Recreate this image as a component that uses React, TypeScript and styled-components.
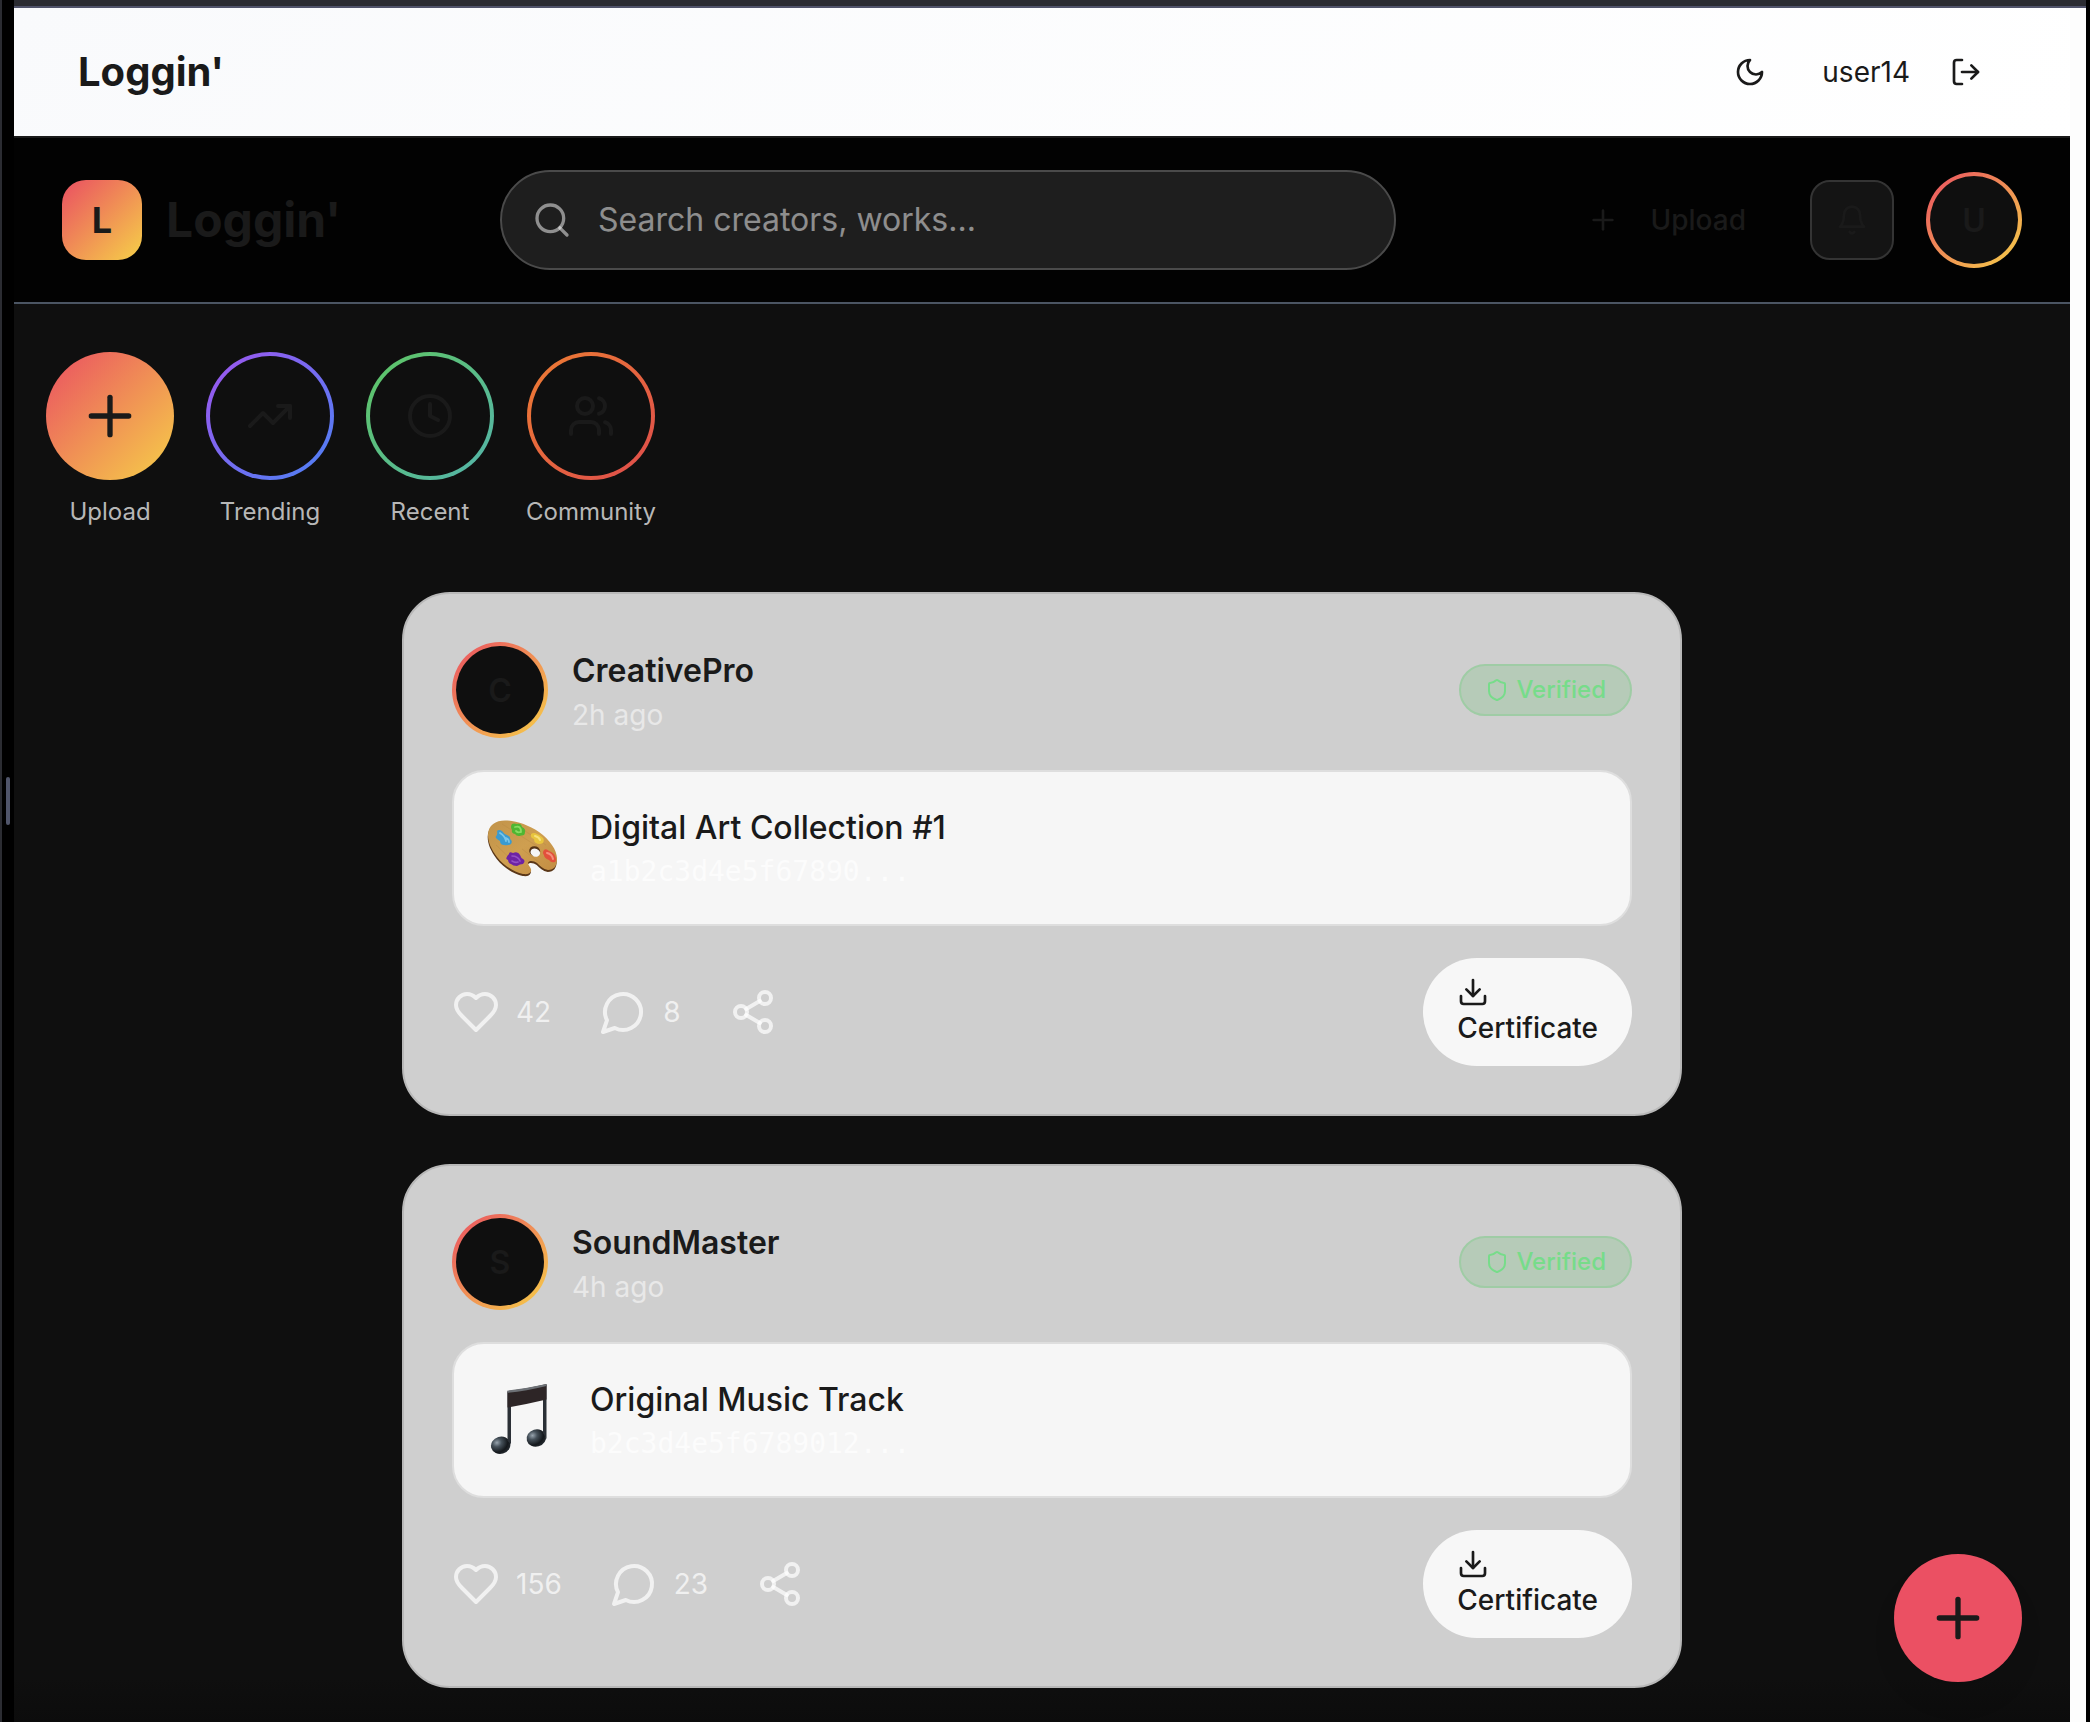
import React from "react";
import styled, { createGlobalStyle } from "styled-components";

const INK = "#1a1a1a";
const SUNSET = "linear-gradient(135deg, #ea4f62, #f6d048)";

const GlobalStyle = createGlobalStyle`
  *, *::before, *::after { box-sizing: border-box; }
  html, body { margin: 0; padding: 0; background: #000; }
  body { font-family: Inter, "Liberation Sans", sans-serif; color: ${INK}; overflow: hidden; }
  button { font: inherit; color: inherit; border: 0; padding: 0; background: none; }
`;

const Window = styled.div`
  display: flex;
  width: 2090px;
  height: 1722px;
  background: #000;
  border-left: 2px solid #2b2c32;
`;
const ResizeRail = styled.div`
  display: flex;
  align-items: center;
  width: 12px;
  padding: 0 0 120px 4px;
`;
const Grip = styled.span`
  width: 4px;
  height: 48px;
  border-radius: 2px;
  background: #50556a;
`;
const Viewport = styled.div`
  display: flex;
  flex-direction: column;
  width: 2072px;
  border-top: 6px solid #2b2c32;
`;
const Pane = styled.div`
  display: flex;
  flex: 1;
  min-height: 0;
  border-top: 2px solid #50536a;
  background: #fdfdfd;
`;
const Page = styled.div`
  display: flex;
  flex-direction: column;
  width: 2056px;
  background: linear-gradient(#0f0f0f 0, #0f0f0f 1670px, #0c0c0c 1714px);
`;

const TopBar = styled.header`
  display: flex;
  align-items: center;
  justify-content: space-between;
  height: 130px;
  padding: 0 88px 0 64px;
  border-bottom: 2px solid ${INK};
  background: linear-gradient(135deg, #f9fafc, #ffffff);
`;
const SiteTitle = styled.h1`
  margin: 0;
  font-size: 40px;
  line-height: 56px;
  font-weight: 700;
`;
const Account = styled.div`
  display: flex;
  align-items: center;
  font-size: 28px;
`;
const UserName = styled.span`
  margin: 0 40px 0 56px;
`;

const AppBar = styled.div`
  display: flex;
  align-items: center;
  justify-content: space-between;
  height: 166px;
  padding: 0 48px;
  border-bottom: 2px solid #4b5563;
  background: #020202;
`;
const Brand = styled.div`
  display: flex;
  align-items: center;
  gap: 24px;
  width: 438px;
`;
const BrandMark = styled.div`
  display: grid;
  place-items: center;
  width: 80px;
  height: 80px;
  border-radius: 24px;
  background: ${SUNSET};
  font-size: 36px;
  font-weight: 700;
`;
const BrandName = styled.span`
  padding-bottom: 2px;
  font-size: 48px;
  font-weight: 700;
`;
const SearchBox = styled.div`
  display: flex;
  align-items: center;
  gap: 26px;
  width: 896px;
  height: 100px;
  padding-left: 30px;
  border: 2px solid #4a4a4a;
  border-radius: 50px;
  background: #1e1e1e;
  color: rgba(255, 255, 255, 0.5);
  font-size: 32px;
`;
const SearchHint = styled.span`
  padding-bottom: 2px;
`;
const BarActions = styled.div`
  display: flex;
  align-items: center;
  justify-content: flex-end;
  flex: 1;
`;
const UploadLink = styled.button`
  display: flex;
  align-items: center;
  gap: 32px;
  margin-right: 64px;
  font-size: 28px;
  font-weight: 500;
`;
const BellButton = styled.button`
  display: grid;
  place-items: center;
  width: 84px;
  height: 80px;
  margin-right: 32px;
  border: 2px solid #343434;
  border-radius: 20px;
  background: #141414;
`;

const Ring = styled.div<{ $size: number; $paint: string; $solid?: boolean }>`
  display: flex;
  flex: none;
  width: ${(p) => p.$size}px;
  height: ${(p) => p.$size}px;
  padding: ${(p) => (p.$solid ? 0 : 4)}px;
  border-radius: 50%;
  background: ${(p) => p.$paint};
`;
const RingCore = styled.div<{ $solid?: boolean }>`
  display: grid;
  flex: 1;
  place-items: center;
  border-radius: 50%;
  background: ${(p) => (p.$solid ? "transparent" : "#0f0f0f")};
  font-size: 32px;
  font-weight: 600;
`;

const Stories = styled.nav`
  display: flex;
  gap: 32px;
  padding: 48px 32px 0;
`;
const Story = styled.div`
  display: flex;
  flex-direction: column;
  align-items: center;
  gap: 16px;
`;
const StoryLabel = styled.span`
  font-size: 24px;
  line-height: 32px;
  color: #b7b7b7;
`;

const Feed = styled.main`
  display: flex;
  flex-direction: column;
  gap: 48px;
  width: 1280px;
  margin: 64px 0 0 388px;
`;
const Card = styled.article`
  display: flex;
  flex-direction: column;
  height: 524px;
  padding: 48px;
  border: 2px solid #b8b8b8;
  border-radius: 48px;
  background: #cfcfcf;
`;
const CardHead = styled.div`
  display: flex;
  align-items: center;
  gap: 24px;
  height: 96px;
`;
const Author = styled.div`
  display: flex;
  flex: 1;
  flex-direction: column;
  padding-top: 1px;
`;
const AuthorName = styled.span`
  font-size: 32px;
  line-height: 48px;
  font-weight: 600;
`;
const Age = styled.span`
  font-size: 28px;
  line-height: 40px;
  color: #e8e8e8;
`;
const Verified = styled.span`
  display: flex;
  align-items: center;
  gap: 7px;
  height: 52px;
  padding: 0 24px 1px;
  border: 2px solid #9fcca5;
  border-radius: 26px;
  background: #b6cbb8;
  color: #77dc8a;
  font-size: 24px;
  font-weight: 500;
`;
const Work = styled.div`
  display: flex;
  align-items: center;
  gap: 32px;
  height: 156px;
  margin: 32px 0;
  padding: 0 32px;
  border: 2px solid #dedede;
  border-radius: 32px;
  background: #f6f6f6;
`;
const WorkInfo = styled.div`
  display: flex;
  flex-direction: column;
`;
const WorkTitle = styled.span`
  font-size: 32px;
  line-height: 48px;
  font-weight: 500;
`;
const Hash = styled.span`
  font-family: "DejaVu Sans Mono", monospace;
  font-size: 28px;
  line-height: 40px;
  color: #fcfcfc;
`;
const CardFoot = styled.div`
  display: flex;
  align-items: center;
  justify-content: space-between;
  height: 108px;
`;
const Reactions = styled.div`
  display: flex;
  gap: 48px;
`;
const Reaction = styled.button`
  display: flex;
  align-items: center;
  gap: 16px;
  color: rgba(255, 255, 255, 0.7);
  font-size: 28px;
`;
const Certificate = styled.button`
  display: flex;
  flex-direction: column;
  align-items: flex-start;
  height: 108px;
  padding: 18px 34px 0;
  border-radius: 54px;
  background: #f7f7f7;
  font-size: 28px;
  line-height: 40px;
  font-weight: 500;
`;
const Fab = styled.button`
  position: fixed;
  left: 1894px;
  top: 1554px;
  display: grid;
  place-items: center;
  width: 128px;
  height: 128px;
  border-radius: 50%;
  background: #eb5063;
  box-shadow: 0 20px 30px -6px rgba(0, 0, 0, 0.1);
`;

const ICONS = {
  moon: ["M12 3a6 6 0 0 0 9 9 9 9 0 1 1-9-9Z"],
  logout: ["M9 21H5a2 2 0 0 1-2-2V5a2 2 0 0 1 2-2h4", "m16 17 5-5-5-5", "M21 12H9"],
  search: ["M19 11a8 8 0 1 1-16 0 8 8 0 0 1 16 0", "m21 21-4.3-4.3"],
  plus: ["M5 12h14", "M12 5v14"],
  bell: ["M6 8a6 6 0 0 1 12 0c0 7 3 9 3 9H3s3-2 3-9", "M10.3 21a1.94 1.94 0 0 0 3.4 0"],
  trending: ["m22 7-8.5 8.5-5-5L2 17", "M16 7h6v6"],
  clock: ["M22 12a10 10 0 1 1-20 0 10 10 0 0 1 20 0", "M12 6v6l4 2"],
  users: [
    "M16 21v-2a4 4 0 0 0-4-4H6a4 4 0 0 0-4 4v2",
    "M13 7a4 4 0 1 1-8 0 4 4 0 0 1 8 0",
    "M22 21v-2a4 4 0 0 0-3-3.87",
    "M16 3.13a4 4 0 0 1 0 7.75",
  ],
  shield: [
    "M20 13c0 5-3.5 7.5-7.66 8.95a1 1 0 0 1-.67-.01C7.5 20.5 4 18 4 13V6a1 1 0 0 1 1-1c2 0 4.5-1.2 6.24-2.72a1.17 1.17 0 0 1 1.52 0C14.51 3.81 17 5 19 5a1 1 0 0 1 1 1z",
  ],
  heart: [
    "M19 14c1.49-1.46 3-3.21 3-5.5A5.5 5.5 0 0 0 16.5 3c-1.76 0-3 .5-4.5 2-1.5-1.5-2.74-2-4.5-2A5.5 5.5 0 0 0 2 8.5c0 2.3 1.5 4.05 3 5.5l7 7Z",
  ],
  comment: ["M7.9 20A9 9 0 1 0 4 16.1L2 22Z"],
  share: [
    "M21 5a3 3 0 1 1-6 0 3 3 0 0 1 6 0",
    "M9 12a3 3 0 1 1-6 0 3 3 0 0 1 6 0",
    "M21 19a3 3 0 1 1-6 0 3 3 0 0 1 6 0",
    "m8.59 13.51 6.83 3.98",
    "m15.41 6.51-6.82 3.98",
  ],
  download: ["M21 15v4a2 2 0 0 1-2 2H5a2 2 0 0 1-2-2v-4", "m7 10 5 5 5-5", "M12 15V3"],
};

function Icon({ name, size }: { name: keyof typeof ICONS; size: number }) {
  return (
    <svg
      width={size}
      height={size}
      viewBox="0 0 24 24"
      fill="none"
      stroke="currentColor"
      strokeWidth={2}
      strokeLinecap="round"
      strokeLinejoin="round"
    >
      {ICONS[name].map((d) => (
        <path key={d} d={d} />
      ))}
    </svg>
  );
}

const BOARD =
  "M2 23C2 13 10 8.500 19 8.500C30 8.500 42 13 53 20C64 28 71 38 71 47C71 54 68 58 62 58C57 57 54 54 51 51C48 49 43 48 42 51C42 54 46 56 45 59C44 62 41 62.500 37 62C28 60 18 54 11 45C5 37 2 30 2 23Z";

function Palette() {
  return (
    <svg width="72" height="72" viewBox="0 0 72 72">
      <defs>
        <linearGradient id="wood" x1="0" y1="0" x2="1" y2="1">
          <stop offset="0" stopColor="#c1934a" />
          <stop offset="0.5" stopColor="#cf9f50" />
          <stop offset="1" stopColor="#c28c42" />
        </linearGradient>
      </defs>
      <path d={BOARD} fill="#5a3718" transform="translate(-.3 2)" />
      <path d={BOARD} fill="url(#wood)" />
      <path d="M10 33 30 52M16 12l38 24M30 13l30 20M36 37l18 14" stroke="#b98a42" strokeWidth="0.800" opacity="0.500" />
      <ellipse cx="48.800" cy="39.300" rx="5.600" ry="4.900" fill="#553417" transform="rotate(20 49 39)" />
      <ellipse cx="49.500" cy="40.500" rx="4.900" ry="4" fill="#f6f6f6" transform="rotate(20 49 40)" />
      <path
        d="M11 19Q13 17 16 19Q18 22 21 23Q25 25 24 27Q27 29 25 32Q22 34 18 33Q14 33 14 29Q10 27 9.500 25Q12 23 11 19Z"
        fill="#3b9bd0"
      />
      <path d="M14 21q5 3 6 8M20 26q3 1 3 4" stroke="#7ac6ea" strokeWidth="1.800" fill="none" strokeLinecap="round" />
      <path
        d="M26 12Q28 11 31 12Q35 11 36 15Q40 17 39 20Q39 24 35 23.500Q31 25 29 22Q25 21 26 18Q24 15 26 12Z"
        fill="#4fb632"
      />
      <path d="M29 15q6-2 6 5M30 19q2 2 4 1" stroke="#88dc62" strokeWidth="1.800" fill="none" strokeLinecap="round" />
      <path
        d="M45 22Q48 20 51 22Q54 23 56 25Q59 27 57 31Q53 33 50 31Q48 30 48 27Q44 26 45 22Z"
        fill="#e8c43e"
      />
      <path d="M49 24q4 1 5 4" stroke="#f8e27c" strokeWidth="2" fill="none" strokeLinecap="round" />
      <path
        d="M58 38Q60 36 63 39Q68 41 69 44Q71 48 69 50Q65 51 63 48Q58 46 58 43Q56 41 58 38Z"
        fill="#e2503c"
      />
      <path d="M61 41q5 1 6 6" stroke="#f58f7c" strokeWidth="2" fill="none" strokeLinecap="round" />
      <path
        d="M23 42Q23 39 27 41Q32 39 34 43Q35 46 37 47Q40 49 37 52Q34 52 31 54Q27 54 25 52Q22 51 22 48Q18 47 23 42Z"
        fill="#6d23a4"
      />
      <path d="M26 44q6 0 8 5M26 49q3 2 6 1" stroke="#9450c6" strokeWidth="1.600" fill="none" strokeLinecap="round" />
    </svg>
  );
}

function Notes() {
  return (
    <svg width="72" height="72" viewBox="0 0 72 72">
      <defs>
        <radialGradient id="bead" cx="0.35" cy="0.3" r="0.8">
          <stop offset="0" stopColor="#98a4ae" />
          <stop offset="0.3" stopColor="#46515a" />
          <stop offset="0.7" stopColor="#14181c" />
          <stop offset="1" stopColor="#2a3036" />
        </radialGradient>
      </defs>
      <ellipse cx="14.700" cy="61.200" rx="9.800" ry="8.600" fill="url(#bead)" transform="rotate(-16 14.700 61.200)" />
      <ellipse cx="50.300" cy="54" rx="9.800" ry="8.600" fill="url(#bead)" transform="rotate(-16 50.300 54)" />
      <path d="M21.500 8H25v52l-3.500-3Z" fill="#2b3036" />
      <path d="M57 1h3.500v54L57 49Z" fill="#2b3036" />
      <path d="M21.500 7Q40 5 60.500 0V15.500Q42 20 21.500 23.500Z" fill="#2d2526" />
      <path d="M21.500 6.500Q40 4.500 60.500 0V2Q40 7 21.500 8.800Z" fill="#6d7176" />
    </svg>
  );
}

const STORIES: { label: string; icon: keyof typeof ICONS; paint: string; solid?: boolean }[] = [
  { label: "Upload", icon: "plus", paint: SUNSET, solid: true },
  { label: "Trending", icon: "trending", paint: "linear-gradient(135deg, #a055ee, #4b82f4)" },
  { label: "Recent", icon: "clock", paint: "linear-gradient(135deg, #5fc663, #54b4ac)" },
  { label: "Community", icon: "users", paint: "linear-gradient(135deg, #ed7d33, #de4c4c)" },
];

const POSTS = [
  { author: "CreativePro", age: "2h ago", art: <Palette />, title: "Digital Art Collection #1", hash: "a1b2c3d4e5f67890...", likes: 42, comments: 8 },
  { author: "SoundMaster", age: "4h ago", art: <Notes />, title: "Original Music Track", hash: "b2c3d4e5f6789012...", likes: 156, comments: 23 },
];

export default function App() {
  return (
    <Window>
      <GlobalStyle />
      <ResizeRail>
        <Grip />
      </ResizeRail>
      <Viewport>
        <Pane>
          <Page>
            <TopBar>
              <SiteTitle>Loggin'</SiteTitle>
              <Account>
                <Icon name="moon" size={32} />
                <UserName>user14</UserName>
                <Icon name="logout" size={32} />
              </Account>
            </TopBar>
            <AppBar>
              <Brand>
                <BrandMark>L</BrandMark>
                <BrandName>Loggin'</BrandName>
              </Brand>
              <SearchBox>
                <Icon name="search" size={40} />
                <SearchHint>Search creators, works...</SearchHint>
              </SearchBox>
              <BarActions>
                <UploadLink>
                  <Icon name="plus" size={32} />
                  Upload
                </UploadLink>
                <BellButton>
                  <Icon name="bell" size={32} />
                </BellButton>
                <Ring $size={96} $paint={SUNSET}>
                  <RingCore>U</RingCore>
                </Ring>
              </BarActions>
            </AppBar>
            <Stories>
              {STORIES.map((s) => (
                <Story key={s.label}>
                  <Ring $size={128} $paint={s.paint} $solid={s.solid}>
                    <RingCore $solid={s.solid}>
                      <Icon name={s.icon} size={s.solid ? 64 : 48} />
                    </RingCore>
                  </Ring>
                  <StoryLabel>{s.label}</StoryLabel>
                </Story>
              ))}
            </Stories>
            <Feed>
              {POSTS.map((p) => (
                <Card key={p.author}>
                  <CardHead>
                    <Ring $size={96} $paint={SUNSET}>
                      <RingCore>{p.author[0]}</RingCore>
                    </Ring>
                    <Author>
                      <AuthorName>{p.author}</AuthorName>
                      <Age>{p.age}</Age>
                    </Author>
                    <Verified>
                      <Icon name="shield" size={24} />
                      Verified
                    </Verified>
                  </CardHead>
                  <Work>
                    {p.art}
                    <WorkInfo>
                      <WorkTitle>{p.title}</WorkTitle>
                      <Hash>{p.hash}</Hash>
                    </WorkInfo>
                  </Work>
                  <CardFoot>
                    <Reactions>
                      <Reaction>
                        <Icon name="heart" size={48} />
                        {p.likes}
                      </Reaction>
                      <Reaction>
                        <Icon name="comment" size={48} />
                        {p.comments}
                      </Reaction>
                      <Reaction>
                        <Icon name="share" size={48} />
                      </Reaction>
                    </Reactions>
                    <Certificate>
                      <Icon name="download" size={32} />
                      Certificate
                    </Certificate>
                  </CardFoot>
                </Card>
              ))}
            </Feed>
          </Page>
        </Pane>
      </Viewport>
      <Fab>
        <Icon name="plus" size={64} />
      </Fab>
    </Window>
  );
}
